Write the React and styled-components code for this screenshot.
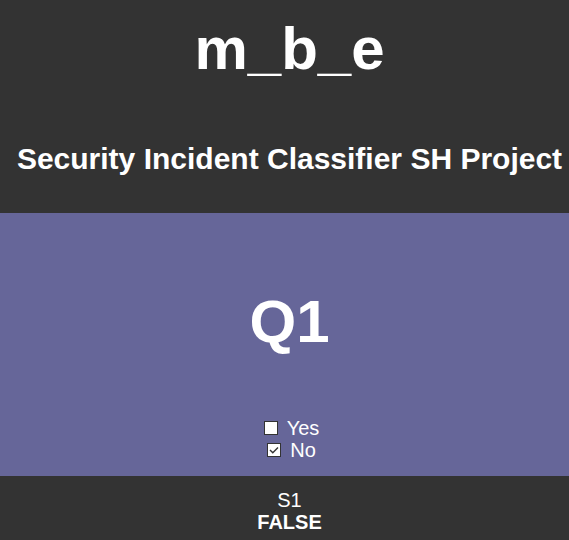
import React from "react";
import styled, { createGlobalStyle } from "styled-components";

const Global = createGlobalStyle`
  html, body { margin: 0; padding: 0; background: #333333; }
  body { font-family: "Liberation Sans", Arial, sans-serif; color: #ffffff; }
`;

const Header = styled.header`
  background: #333333;
  padding: 19px 0 39px 10px;
  display: flex;
  flex-direction: column;
  align-items: center;
  gap: 65px;
`;

const Brand = styled.h1`
  margin: 0;
  font-size: 60px;
  line-height: 60px;
  font-weight: 700;
`;

const Title = styled.h2`
  margin: 0;
  font-size: 30px;
  line-height: 30px;
  font-weight: 700;
  white-space: nowrap;
`;

const Question = styled.section`
  background: #666699;
  padding: 79px 0 15px 10px;
  display: flex;
  flex-direction: column;
  align-items: center;
`;

const QTitle = styled.h3`
  margin: 0 0 65px;
  font-size: 60px;
  line-height: 60px;
  font-weight: 700;
`;

const Option = styled.label`
  display: flex;
  align-items: center;
  height: 22px;
  font-size: 20px;
  line-height: 22px;
`;

const Box = styled.span`
  width: 14px;
  height: 14px;
  box-sizing: border-box;
  margin: 0 9px 0 4px;
  background: #ffffff;
  border: 1px solid #333333;
  display: flex;
  align-items: center;
  justify-content: center;
`;

const Footer = styled.footer`
  background: #333333;
  padding: 13px 0 7px 10px;
  display: flex;
  flex-direction: column;
  align-items: center;
  font-size: 20px;
  line-height: 22px;
`;

const Strong = styled.strong`
  font-weight: 700;
`;

function Check({ checked, label }) {
  return (
    <Option>
      <Box>
        {checked && (
          <svg width="12" height="12" viewBox="0 0 12 12">
            <polyline
              points="2,6 4.8,8.8 10,3.5"
              fill="none"
              stroke="#333333"
              strokeWidth="1.4"
            />
          </svg>
        )}
      </Box>
      {label}
    </Option>
  );
}

export default function App() {
  return (
    <>
      <Global />
      <Header>
        <Brand>m_b_e</Brand>
        <Title>Security Incident Classifier SH Project</Title>
      </Header>
      <Question>
        <QTitle>Q1</QTitle>
        <Check label="Yes" />
        <Check checked label="No" />
      </Question>
      <Footer>
        <span>S1</span>
        <Strong>FALSE</Strong>
      </Footer>
    </>
  );
}
